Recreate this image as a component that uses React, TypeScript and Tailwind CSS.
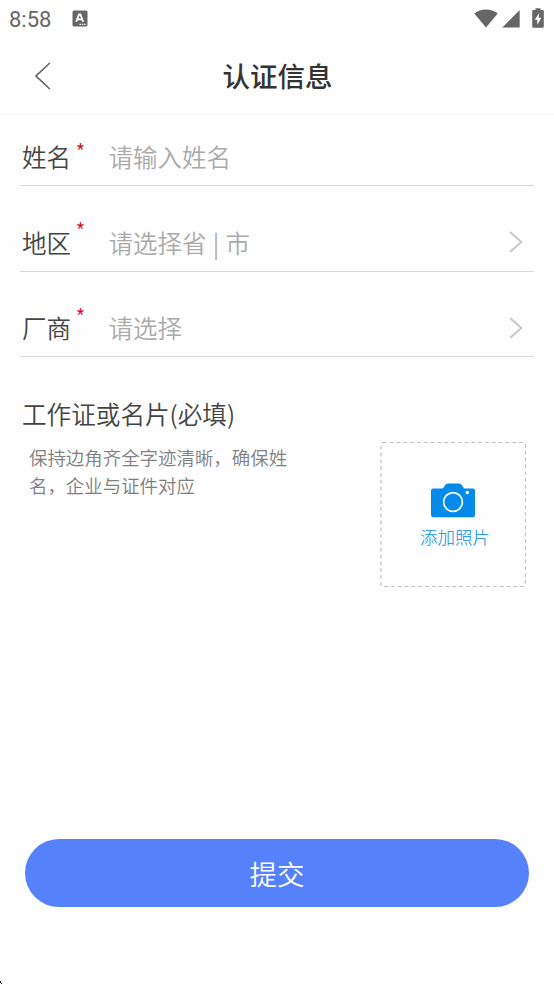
import type { ReactNode } from 'react';

interface FieldProps {
  label: string;
  placeholder: string;
  markClass: string;
  children?: ReactNode;
}

const ChevronRight = () => (
  <svg className="mr-[11px] mb-px h-[22px] w-[14px]" viewBox="0 0 14 22" fill="none" stroke="#c8c8c8" strokeWidth="2">
    <path d="M1 1 L12.3 11 L1 21" />
  </svg>
);

const Field = ({ label, placeholder, markClass, children }: FieldProps) => (
  <div className="mb-[28.5px] flex h-[57px] items-center border-b border-[#d9d9d9] text-[24.5px] leading-9">
    <span className="w-[57px] pl-[2px] text-[#444]">{label}</span>
    <span className={`w-[31.5px] font-[Roboto] text-base font-normal leading-4 text-[#d0021b] ${markClass}`}>*</span>
    <span className="flex-1 text-[#aaa] [word-spacing:0.8px]">{placeholder}</span>
    {children}
  </div>
);

const StatusBar = () => (
  <div className="flex h-[38px] items-center pl-[9px] pr-[10px] text-[#666]">
    <span className="w-[63px] pt-px font-[Roboto] text-[22px] font-normal leading-6">8:58</span>
    <svg className="mb-px h-[17px] w-[16px]" viewBox="0 0 16 17">
      <rect x="0.5" y="0.5" width="15" height="16" rx="1.5" fill="#666" />
      <path d="M4.2 11.8 L7 4.5 H8.4 L11.2 11.8 M5.4 9.3 H10" fill="none" stroke="#fff" strokeWidth="1.8" />
      <path d="M7.5 14.4 H14" stroke="#fff" strokeWidth="1.3" strokeDasharray="1.4 1" />
    </svg>
    <div className="mb-[2px] ml-auto flex items-center">
      <svg className="h-[19px] w-6" viewBox="0 0 24 19" fill="#666">
        <path d="M0.3 4.4 C7 -0.7 17 -0.7 23.7 4.4 L12 18.6 Z" />
      </svg>
      <svg className="ml-1 h-[19px] w-[18px]" viewBox="0 0 18 19" fill="#666">
        <path d="M0.3 18.5 L17.7 1 V18.5 Z" />
      </svg>
      <svg className="ml-3 h-5 w-3" viewBox="0 0 12 20">
        <path d="M1.3 2 H3.5 V0.3 H8.5 V2 H10.7 Q11.8 2 11.8 3.2 V18.6 Q11.8 19.8 10.7 19.8 H1.3 Q0.2 19.8 0.2 18.6 V3.2 Q0.2 2 1.3 2 Z" fill="#666" />
        <path d="M7.3 4.7 L2.8 11.8 H5.3 V17 L9.3 9.7 H6.7 Z" fill="#fff" />
      </svg>
    </div>
  </div>
);

const Camera = () => (
  <svg className="h-9 w-11" viewBox="0 0 44 36">
    <path
      d="M2 5.5 H10.8 Q12.3 5.5 13 4 L14.2 2 Q15 0.5 17 0.5 H28 Q30 0.5 30.8 2 L32 4 Q32.7 5.5 34.2 5.5 H42 Q44 5.5 44 7.5 V32 Q44 34.3 41.8 34.3 H2.2 Q0 34.3 0 32 V7.5 Q0 5.5 2 5.5 Z"
      fill="#048ae8"
    />
    <circle cx="22" cy="19" r="9.4" fill="none" stroke="#fff" strokeWidth="1.7" />
    <circle cx="36.3" cy="9.5" r="1.8" fill="#fff" />
  </svg>
);

export default function App() {
  return (
    <div className="relative flex h-[984px] w-[554px] flex-col overflow-hidden bg-[#fefefe] font-['Noto_Sans_CJK_SC',sans-serif] font-[350]">
      <StatusBar />

      <header className="grid h-[77px] grid-cols-3 items-center border-b border-[#f9f9f9]">
        <svg className="ml-[35px] h-7 w-4" viewBox="0 0 16 28" fill="none" stroke="#666" strokeWidth="1.7">
          <path d="M14.8 1 L1 14 L14.8 27" />
        </svg>
        <h1 className="pb-[2px] pl-px text-center text-[27.5px] font-medium leading-9 text-[#333]">认证信息</h1>
      </header>

      <main className="px-5 pt-[14px]">
        <Field label="姓名" placeholder="请输入姓名" markClass="pb-[14px]" />
        <Field label="地区" placeholder="请选择省 | 市" markClass="pb-[27px]">
          <ChevronRight />
        </Field>
        <Field label="厂商" placeholder="请选择" markClass="pb-[26px]">
          <ChevronRight />
        </Field>

        <h2 className="mt-[38px] pl-[2px] text-[24.6px] font-[350] leading-9 text-[#444]">工作证或名片(必填)</h2>
        <div className="flex items-start justify-between pl-[9px] pr-2">
          <p className="mt-3 w-[264px] text-[18.45px] leading-7 text-[#808080]">保持边角齐全字迹清晰，确保姓名，企业与证件对应</p>
          <button className="relative mt-[11px] flex h-[145px] w-[146px] flex-col items-center pt-[41px]">
            <svg className="absolute inset-0 size-full" viewBox="0 0 146 145" fill="none">
              <rect x="1" y="0.5" width="144.5" height="144" rx="2" stroke="#c0c0c0" strokeWidth="1.2" strokeDasharray="3.8 3" />
            </svg>
            <Camera />
            <span className="mt-1 pl-1 text-[17.5px] font-light leading-7 text-[#048ae8]">添加照片</span>
          </button>
        </div>
      </main>

      <button className="mx-[25px] mb-[77px] mt-auto h-[68px] rounded-full bg-[#5581fa] text-[27.5px] leading-9 text-white">提交</button>

      <svg className="absolute bottom-0 left-0 h-[3px] w-[2px]" viewBox="0 0 2 3">
        <path d="M0 0 H1 V2 H2 V3 H1 V2 H0 Z" fill="#000" />
      </svg>
    </div>
  );
}
